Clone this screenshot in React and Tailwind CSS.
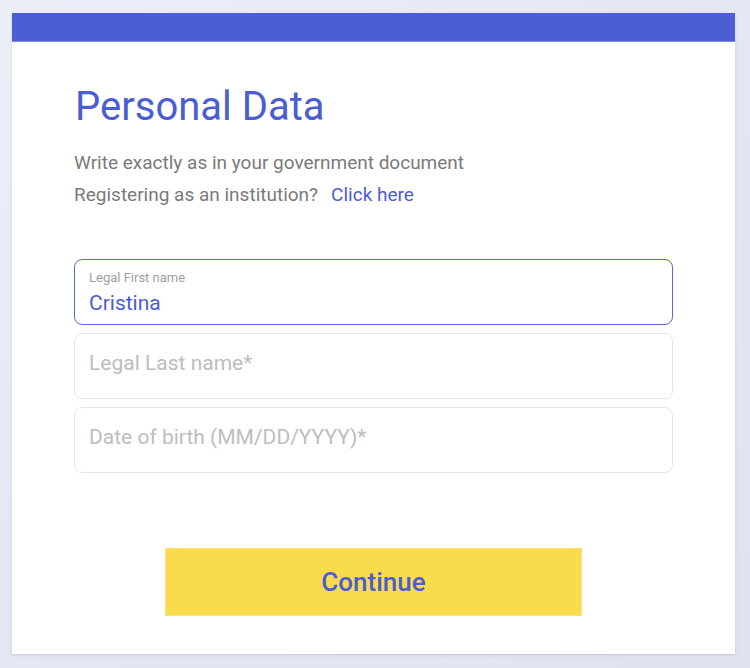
import React, { useState } from 'react';

const fieldBase =
  'w-full h-[66px] rounded-lg border bg-white px-[14px] flex flex-col justify-center';

const App = () => {
  const [firstName, setFirstName] = useState('Cristina');

  return (
    <div
      className="min-h-[668px] w-full bg-gradient-to-br from-[#eceef8] via-[#e4e6f3] to-[#dfe2f0] pt-[13px] pl-[12px] pr-[15px] pb-[14px]"
      style={{ fontFamily: 'Roboto, "Noto Sans", sans-serif' }}
    >
      <div className="w-[723px] bg-white shadow-sm">
        {/* Top bar */}
        <div className="h-[29px] bg-[#4c5ed1] border-b border-[#7b87e0]" />

        <div className="px-[62px] pt-[41px] pb-[38px]">
          <h1 className="text-[40px] leading-[48px] text-[#4b5dd3] pl-[1px]">Personal Data</h1>

          <div className="mt-[16px] text-[19px] leading-[32px] text-[#7a7a7a]">
            <p>Write exactly as in your government document</p>
            <p>
              Registering as an institution?
              <a href="#" className="ml-[13px] text-[#4b5dd3]">Click here</a>
            </p>
          </div>

          {/* Inputs */}
          <div className="mt-[48px] flex flex-col gap-[8px]">
            <div className={`${fieldBase} border-[#5b6bdb]`}>
              <span className="text-[13px] leading-[16px] text-[#9e9e9e]">Legal First name</span>
              <input
                value={firstName}
                onChange={(e) => setFirstName(e.target.value)}
                className="mt-[5px] text-[21px] leading-[24px] text-[#4b5dd3] outline-none bg-transparent"
              />
            </div>
            <div className={`${fieldBase} border-[#e6e6e6]`}>
              <input
                placeholder="Legal Last name*"
                className="-mt-[6px] text-[21px] leading-[24px] text-[#444] placeholder:text-[#bdbdbd] outline-none bg-transparent"
              />
            </div>
            <div className={`${fieldBase} border-[#e6e6e6]`}>
              <input
                placeholder="Date of birth (MM/DD/YYYY)*"
                className="-mt-[6px] text-[21px] leading-[24px] text-[#444] placeholder:text-[#bdbdbd] outline-none bg-transparent"
              />
            </div>
          </div>

          <div className="mt-[75px] flex justify-center">
            <button className="w-[417px] h-[68px] bg-[#fadb4e] border border-[#fbe27a] text-[26px] font-medium text-[#4b5dd3]">
              Continue
            </button>
          </div>
        </div>
      </div>
    </div>
  );
};

export default App;
